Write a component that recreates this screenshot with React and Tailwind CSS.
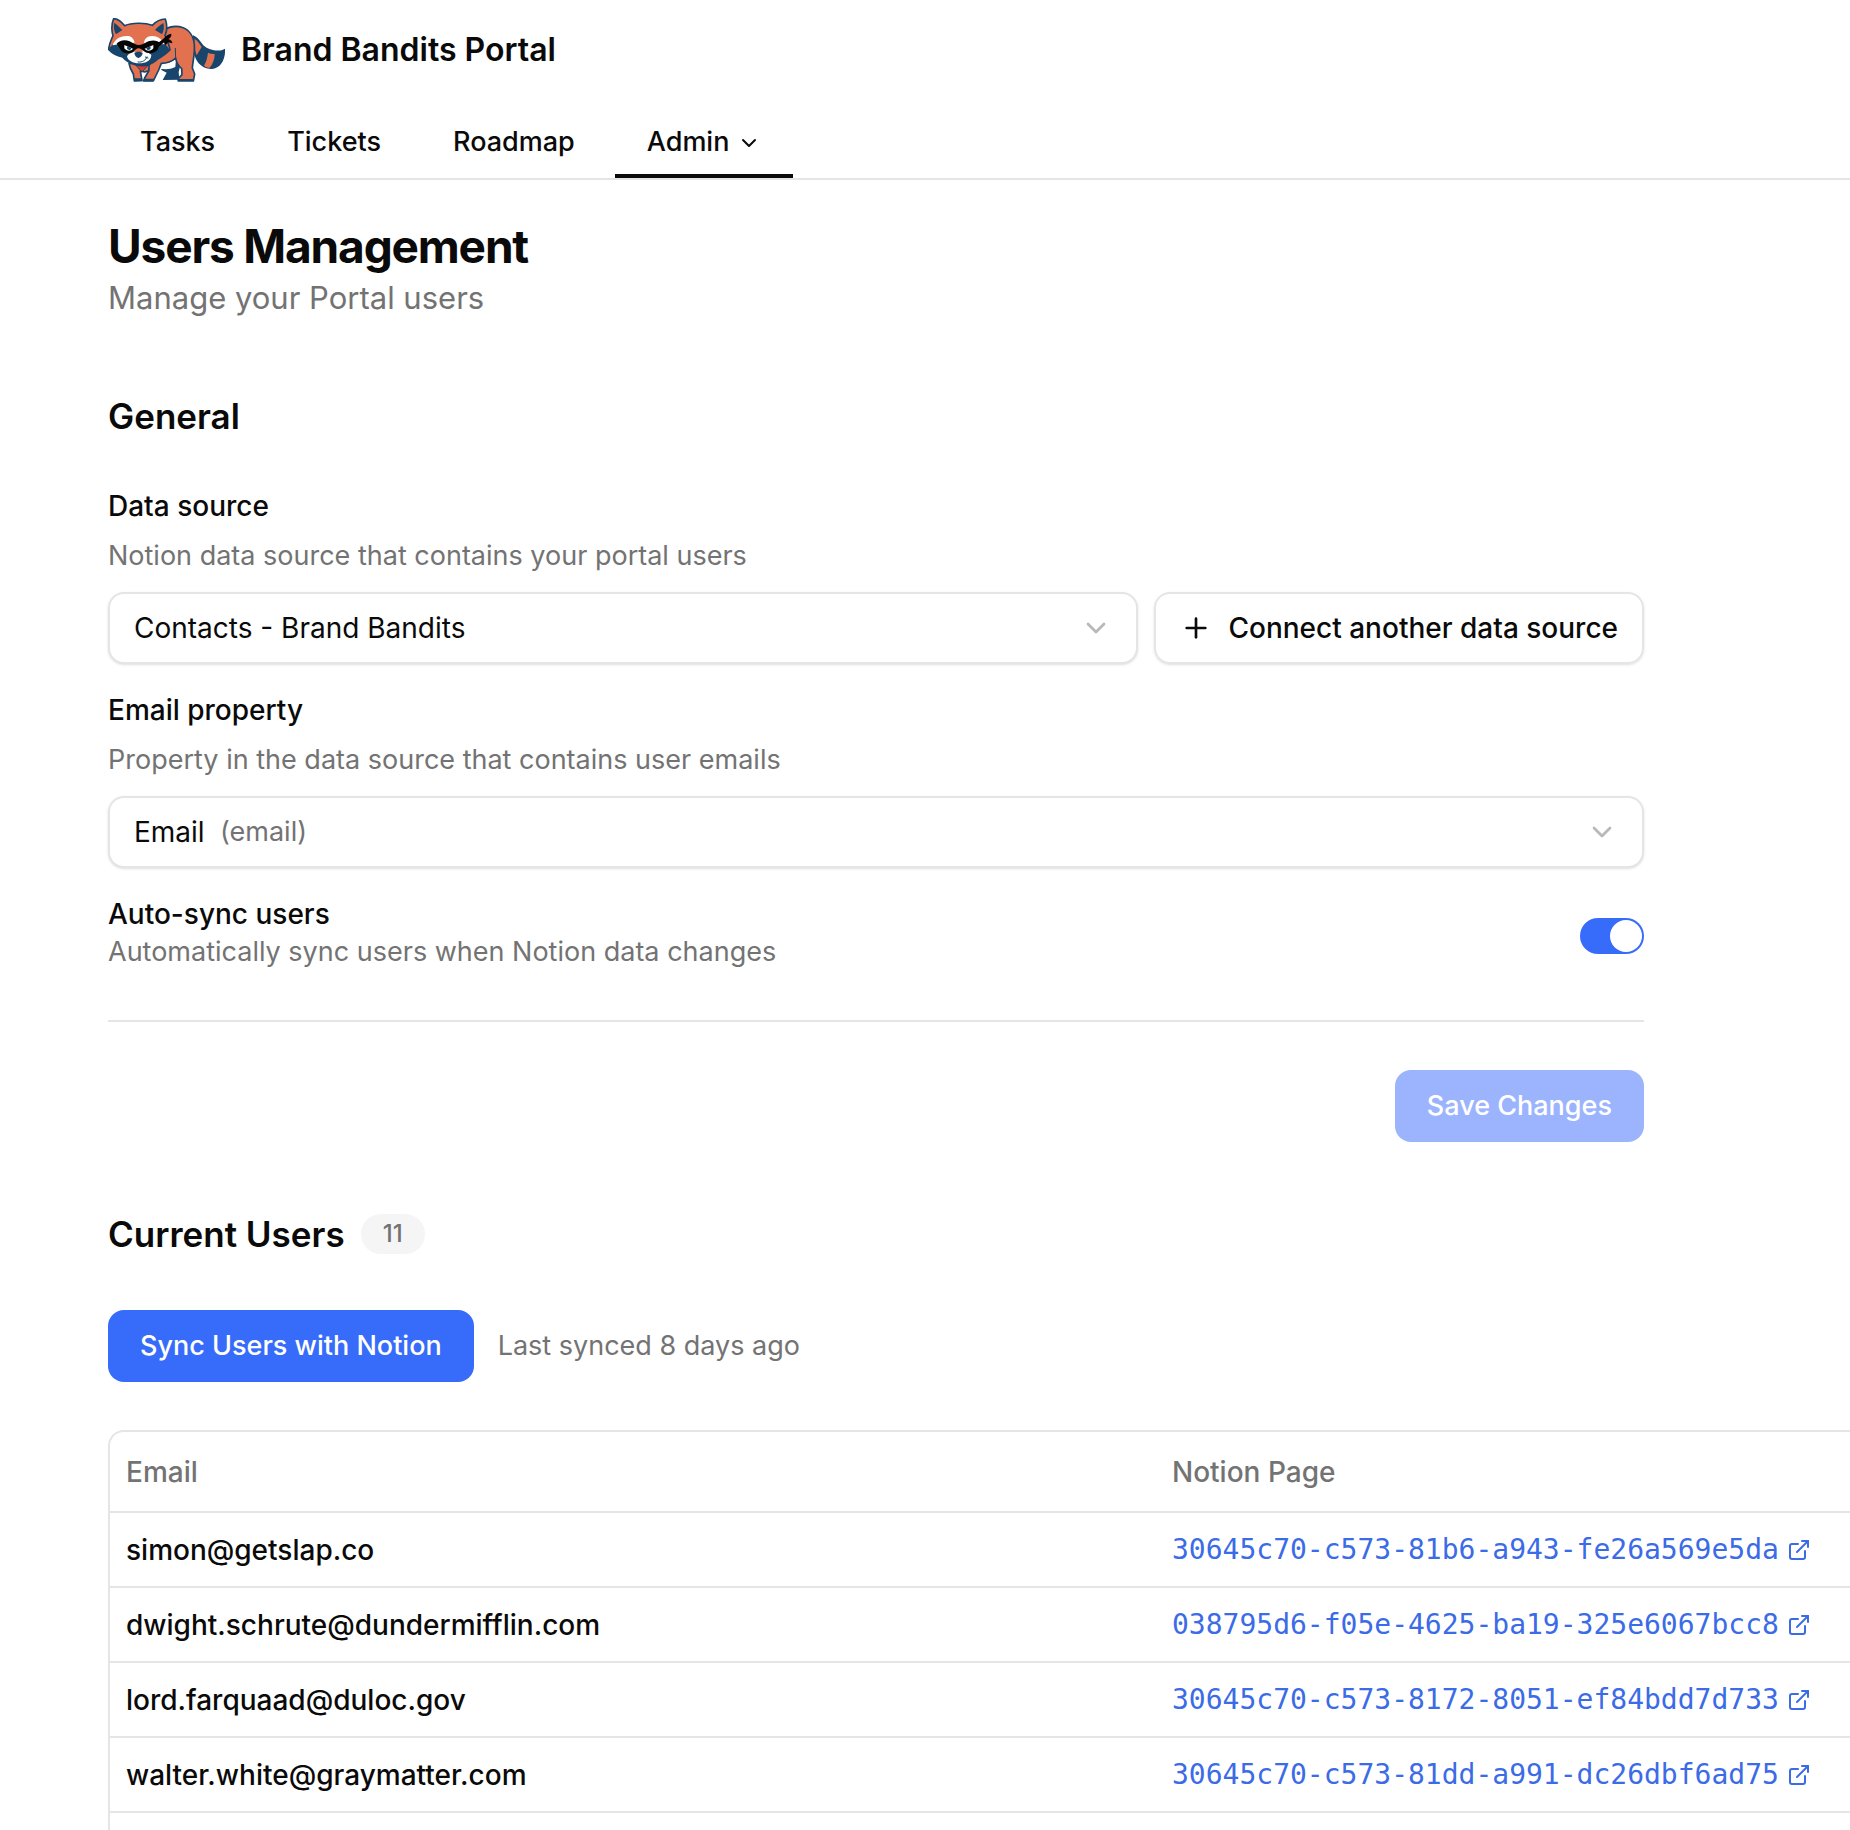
import React, { useState } from 'react';
import { ChevronDown, ExternalLink, Plus } from 'lucide-react';

const tabs = ['Tasks', 'Tickets', 'Roadmap'];

const users = [
  { email: 'simon@getslap.co', page: '30645c70-c573-81b6-a943-fe26a569e5da' },
  { email: 'dwight.schrute@dundermifflin.com', page: '038795d6-f05e-4625-ba19-325e6067bcc8' },
  { email: 'lord.farquaad@duloc.gov', page: '30645c70-c573-8172-8051-ef84bdd7d733' },
  { email: 'walter.white@graymatter.com', page: '30645c70-c573-81dd-a991-dc26dbf6ad75' },
];

const Logo = () => (
  <svg viewBox="54 54 351 192" className="h-16 w-[117px] shrink-0" aria-hidden="true">
    {/* tail */}
    <path d="M309 106 C320 110 326 118 333 127 C342 141 356 149 372 151 C387 153 397 151 405 146 C407 172 396 203 367 207 C345 208 327 196 318 178 C311 164 311 150 308 138 Z" fill="#17456b" />
    <path d="M314 117 C322 121 328 131 335 141 L320 166 C314 152 314 140 312 130 Z" fill="#e2714f" />
    <path d="M354 158 C361 161 367 162 374 162 C374 177 369 192 359 203 C353 203 347 201 342 197 C349 185 352 173 354 158 Z" fill="#e2714f" />
    {/* far legs and belly */}
    <path d="M218 178 L276 176 L266 216 L268 239 L218 240 L230 218 L214 210 Z" fill="#17456b" />
    <path d="M212 190 C225 190 242 187 258 178 L256 201 C240 209 224 208 210 206 Z" fill="#fff" />
    {/* body */}
    <path d="M226 88 C238 80 253 78 268 80 C294 85 311 105 313 135 C315 160 309 181 307 204 L314 222 L310 243 L265 243 L264 237 L276 224 L275 206 C266 198 259 188 257 174 C243 187 228 190 214 190 L206 210 L190 243 L160 243 L164 234 L176 213 L172 188 Z" fill="#e2714f" stroke="#17456b" strokeWidth="5" strokeLinejoin="round" />
    <path d="M257 176 L256 145" fill="none" stroke="#17456b" strokeWidth="3" strokeLinecap="round" />
    <path d="M267 237 L310 237 L309 243 L265 243 Z M163 236 L192 236 L189 244 L161 244 Z" fill="#17456b" />
    {/* front leg */}
    <path d="M117 190 L178 190 L176 212 L164 216 L151 213 L156 241 L133 243 L130 222 C124 212 119 203 117 190 Z" fill="#e2714f" stroke="#17456b" strokeWidth="5" strokeLinejoin="round" />
    <path d="M132 235 L155 235 L156 244 L133 244 Z" fill="#17456b" />
    <path d="M137 195 L175 195 L156 216 Z" fill="#e23b2e" stroke="#17456b" strokeWidth="3" />
    {/* head */}
    <path d="M71 56 C82 56 95 66 104 77 C124 68 164 67 187 76 C197 65 209 57 226 57 C231 72 231 93 225 106 C231 119 238 135 240 150 C228 161 216 171 203 177 C184 196 156 202 133 193 C116 188 104 178 98 171 C81 167 66 159 56 148 C57 132 64 119 69 107 C64 90 65 71 71 56 Z" fill="#e2714f" stroke="#17456b" strokeWidth="5" strokeLinejoin="round" />
    {/* ears */}
    <path d="M73 68 C84 75 91 85 97 90 L78 103 C72 93 70 80 73 68 Z M220 69 C209 75 201 84 195 90 L216 103 C222 93 223 80 220 69 Z" fill="#17456b" />
    {/* cheeks, brows and muzzle */}
    <path d="M57 146 C64 136 73 130 82 127 L139 149 L198 149 L219 128 C228 133 235 141 239 150 C228 161 216 171 203 177 C184 196 156 202 133 193 C116 188 104 178 98 171 C81 167 66 159 57 146 Z" fill="#17456b" />
    <path d="M68 136 C74 116 96 104 119 109 C127 112 132 119 134 128 L112 129 L90 132 Z M224 133 C215 114 195 104 174 110 C166 114 163 120 162 129 L184 130 L208 132 Z" fill="#fff" />
    <path d="M137 135 L145 130 L155 135 C160 151 177 158 184 165 C183 182 168 190 148 190 C128 190 113 182 111 169 C118 158 132 151 137 135 Z" fill="#fff" />
    <path d="M141 118 L153 118 L158 157 L133 157 Z" fill="#e2714f" />
    {/* mask */}
    <path d="M80 131 C88 121 104 117 119 124 C130 130 137 135 147 135 C159 135 167 126 178 123 C193 119 205 123 211 131 L202 151 C191 162 171 162 162 154 C155 148 151 145 146 145 C139 145 137 149 131 155 C120 163 103 162 94 152 Z" fill="#050505" />
    <path d="M204 129 L222 115 C228 107 235 102 244 101 C245 108 241 114 235 117 C242 119 248 124 247 130 L234 127 C232 130 230 134 226 135 L222 127 L207 140 Z" fill="#050505" />
    <path d="M103 135 L129 146 C124 154 109 154 103 145 Z M190 135 L164 146 C169 154 184 154 190 145 Z" fill="#fff" />
    <path d="M112 139 L124 144 C123 152 113 152 111 145 Z M181 139 L169 144 C170 152 180 152 182 145 Z" fill="#17456b" />
    <path d="M133 160 C137 154 154 154 158 160 C157 168 150 174 145 174 C140 174 134 168 133 160 Z" fill="#17456b" />
    <path d="M144 186 C157 188 167 181 171 171 M166 171 L174 174" fill="none" stroke="#17456b" strokeWidth="3" strokeLinecap="round" />
  </svg>
);

const Field = ({ id, label, hint, children }) => (
  <div className="flex flex-col gap-4">
    <label htmlFor={id} className="leading-7 font-medium">{label}</label>
    <p className="text-[27px] leading-10 text-neutral-500">{hint}</p>
    {children}
  </div>
);

const SelectBox = ({ id, option, type }) => (
  <div className="relative flex-1">
    <select
      id={id}
      className="h-[72px] w-full appearance-none rounded-2xl border-2 border-neutral-200 bg-white px-6 shadow-sm"
    >
      <option>{option}</option>
    </select>
    {type && (
      <span className="pointer-events-none absolute inset-y-0 left-28 flex items-center text-[27px] text-neutral-500">({type})</span>
    )}
    <ChevronDown
      size={32}
      strokeWidth={2}
      className="pointer-events-none absolute inset-y-0 right-[26px] my-auto text-neutral-500 opacity-50"
    />
  </div>
);

const App = () => {
  const [autoSync, setAutoSync] = useState(true);

  return (
    <div className="flex min-h-screen flex-col overflow-x-hidden bg-white font-['Inter',sans-serif] text-[28px] text-neutral-950">
      <header className="border-b-2 border-neutral-200 px-[108px] pt-[18px]">
        <div className="flex items-center gap-4">
          <Logo />
          <span className="text-[32px] leading-10 font-semibold">Brand Bandits Portal</span>
        </div>
        <nav className="mt-7 flex gap-2 text-[27px] leading-10 font-medium">
          {tabs.map((tab) => (
            <a key={tab} href="#" className="border-b-4 border-transparent px-8 py-3">{tab}</a>
          ))}
          <button type="button" className="flex items-center gap-2 border-b-4 border-neutral-950 px-8 py-3">
            Admin
            <ChevronDown size={24} strokeWidth={2} className="mt-0.5" />
          </button>
        </nav>
      </header>

      <main className="flex flex-1 flex-col pt-[38px] pl-[108px]">
        <h1 className="text-[46px] leading-[56px] font-bold tracking-tight">Users Management</h1>
        <p className="text-[31px] leading-[48px] text-neutral-500">Manage your Portal users</p>

        {/* General settings */}
        <form className="mt-[74px] flex max-w-[1536px] flex-col" onSubmit={(e) => e.preventDefault()}>
          <h2 className="mb-14 text-[35px] leading-10 font-semibold">General</h2>
          <div className="flex flex-col gap-8">
            <Field id="data-source" label="Data source" hint="Notion data source that contains your portal users">
              <div className="flex gap-4">
                <SelectBox id="data-source" option="Contacts - Brand Bandits" />
                <button
                  type="button"
                  className="flex h-[72px] items-center gap-4 rounded-2xl border-2 border-neutral-200 px-6 font-medium shadow-sm"
                >
                  <Plus size={32} strokeWidth={2} />
                  Connect another data source
                </button>
              </div>
            </Field>

            <Field id="email-property" label="Email property" hint="Property in the data source that contains user emails">
              <SelectBox id="email-property" option="Email" type="email" />
            </Field>

            <div className="flex items-center justify-between">
              <div className="flex flex-col gap-1">
                <label htmlFor="auto-sync" className="leading-7 font-medium">Auto-sync users</label>
                <p className="text-[27px] leading-10 text-neutral-500">Automatically sync users when Notion data changes</p>
              </div>
              <input
                id="auto-sync"
                type="checkbox"
                role="switch"
                checked={autoSync}
                onChange={(e) => setAutoSync(e.target.checked)}
                className="flex h-9 w-16 appearance-none rounded-full bg-neutral-200 p-0.5 before:size-8 before:rounded-full before:bg-white checked:justify-end checked:bg-[#376cfb]"
              />
            </div>
          </div>

          <div className="mt-12 flex justify-end border-t-2 border-neutral-200 pt-12">
            <button type="submit" disabled className="h-[72px] rounded-2xl bg-[#9cb4fe] px-8 text-[27px] font-medium text-white">
              Save Changes
            </button>
          </div>
        </form>

        {/* Users list */}
        <div className="mt-[72px] flex items-center gap-4">
          <h2 className="text-[35px] leading-10 font-semibold">Current Users</h2>
          <span className="rounded-full bg-neutral-100 px-[22px] text-2xl leading-10 font-medium text-neutral-500">11</span>
        </div>
        <div className="mt-14 flex items-center gap-6 text-[27px]">
          <button type="button" className="h-[72px] rounded-2xl bg-[#376cfb] px-8 font-medium text-white">
            Sync Users with Notion
          </button>
          <span className="text-neutral-500">Last synced 8 days ago</span>
        </div>

        <div className="mt-12 flex-1 rounded-tl-2xl border-t-2 border-l-2 border-neutral-200">
          <table className="w-full text-left">
            <thead>
              <tr className="h-20 border-b-2 border-neutral-200 text-neutral-500">
                <th className="w-[1046px] px-4 font-medium">Email</th>
                <th className="px-4 font-medium">Notion Page</th>
              </tr>
            </thead>
            <tbody>
              {users.map((user) => (
                <tr key={user.email} className="h-[75px] border-b-2 border-neutral-200">
                  <td className="px-4 font-medium">{user.email}</td>
                  <td className="px-4">
                    <a href="#" className="flex items-center gap-2 font-['DejaVu_Sans_Mono',monospace] text-[#3b6be6]">
                      {user.page}
                      <ExternalLink size={24} strokeWidth={2} />
                    </a>
                  </td>
                </tr>
              ))}
            </tbody>
          </table>
        </div>
      </main>
    </div>
  );
};

export default App;
